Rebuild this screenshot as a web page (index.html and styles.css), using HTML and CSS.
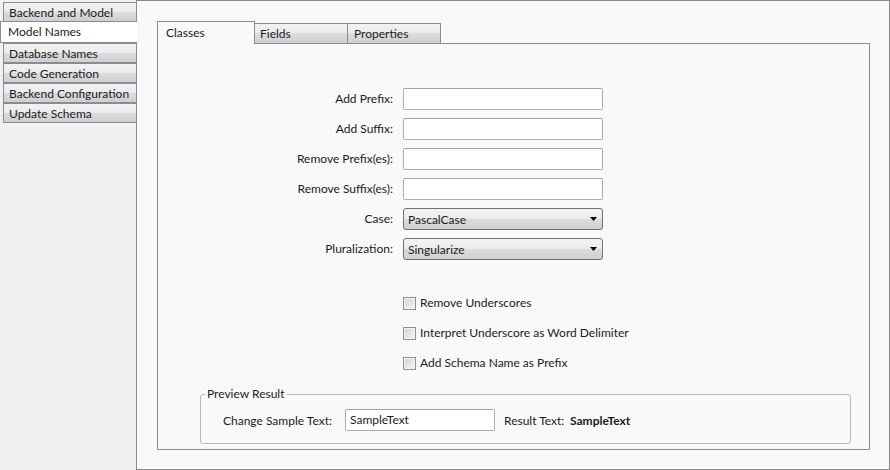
FILE: index.html
```html
<!DOCTYPE html>
<html>
<head>
<meta charset="utf-8">
<link rel="stylesheet" href="styles.css">
</head>
<body>
<div class="window">
  <nav class="side-tabs">
    <div class="vtab">Backend and Model</div>
    <div class="vtab selected">Model Names</div>
    <div class="vtab">Database Names</div>
    <div class="vtab">Code Generation</div>
    <div class="vtab">Backend Configuration</div>
    <div class="vtab">Update Schema</div>
  </nav>
  <main class="panel">
    <div class="htabs">
      <div class="htab selected">Classes</div>
      <div class="htab tab-fields">Fields</div>
      <div class="htab tab-props">Properties</div>
    </div>
    <section class="tab-content">
      <div class="form-grid">
        <label class="lbl">Add Prefix:</label><div class="textbox"></div>
        <label class="lbl">Add Suffix:</label><div class="textbox"></div>
        <label class="lbl">Remove Prefix(es):</label><div class="textbox"></div>
        <label class="lbl">Remove Suffix(es):</label><div class="textbox"></div>
        <label class="lbl">Case:</label>
        <div class="combo"><span>PascalCase</span><svg class="arrow" width="7" height="4" viewBox="0 0 7 4"><polygon points="0,0 7,0 3.5,4" fill="#000"/></svg></div>
        <label class="lbl">Pluralization:</label>
        <div class="combo"><span>Singularize</span><svg class="arrow" width="7" height="4" viewBox="0 0 7 4"><polygon points="0,0 7,0 3.5,4" fill="#000"/></svg></div>
      </div>
      <div class="checks">
        <div class="check"><span class="box"></span><span>Remove Underscores</span></div>
        <div class="check"><span class="box"></span><span>Interpret Underscore as Word Delimiter</span></div>
        <div class="check"><span class="box"></span><span>Add Schema Name as Prefix</span></div>
      </div>
      <fieldset class="preview">
        <legend>Preview Result</legend>
        <div class="preview-row">
          <span class="plabel">Change Sample Text:</span>
          <div class="textbox sample">SampleText</div>
          <span class="rlabel">Result Text:</span>
          <span class="result">SampleText</span>
        </div>
      </fieldset>
    </section>
  </main>
</div>
</body>
</html>
```
FILE: styles.css
```css
html, body {
  margin: 0;
  padding: 0;
}
body {
  background: #f0f0f0;
  font-family: Lato, "Open Sans", sans-serif;
  font-size: 12px;
  color: #1b1b1b;
  width: 890px;
  height: 470px;
  overflow: hidden;
}
.window {
  display: flex;
  height: 470px;
}
.side-tabs {
  width: 136px;
  flex-shrink: 0;
  padding-top: 2px;
  display: flex;
  flex-direction: column;
  box-sizing: border-box;
}
.vtab {
  margin-left: 3px;
  height: 20px;
  box-sizing: border-box;
  border: 1px solid #898c95;
  border-right: none;
  background: linear-gradient(#f2f2f2 0%, #ebebeb 50%, #dddddd 50%, #cfcfcf 100%);
  padding-left: 5px;
  line-height: 19px;
  white-space: nowrap;
}
.vtab.selected {
  margin-left: 0;
  margin-top: -1px;
  height: 22px;
  width: 137px;
  background: #ffffff;
  position: relative;
  z-index: 1;
  padding-left: 7px;
  line-height: 20px;
}
.panel {
  flex: 1;
  box-sizing: border-box;
  height: 470px;
  border: 1px solid #898c95;
  background: #f9f9f9;
  padding: 20px 19px 19px 20px;
  display: flex;
  flex-direction: column;
}
.htabs {
  display: flex;
  align-items: flex-end;
  height: 22px;
  flex-shrink: 0;
}
.htab {
  box-sizing: border-box;
  height: 20px;
  border: 1px solid #898c95;
  border-bottom: none;
  background: linear-gradient(#f2f2f2 0%, #ebebeb 50%, #dddddd 50%, #cfcfcf 100%);
  line-height: 19px;
  white-space: nowrap;
}
.htab.selected {
  width: 98px;
  height: 23px;
  margin-bottom: -1px;
  background: #f9f9f9;
  position: relative;
  z-index: 1;
  padding-left: 8px;
  line-height: 21px;
}
.tab-fields {
  width: 94px;
  margin-left: -1px;
  padding-left: 5px;
}
.tab-props {
  width: 94px;
  margin-left: -1px;
  padding-left: 6px;
}
.tab-content {
  flex: 1;
  border: 1px solid #898c95;
  padding-top: 44px;
  display: flex;
  flex-direction: column;
}
.form-grid {
  display: grid;
  grid-template-columns: 235px 200px;
  grid-auto-rows: 22px;
  column-gap: 10px;
  row-gap: 8px;
}
.lbl {
  text-align: right;
  line-height: 21px;
  white-space: nowrap;
}
.textbox {
  box-sizing: border-box;
  height: 22px;
  background: #ffffff;
  border: 1px solid #abadb3;
  border-top-color: #a3a3a3;
  border-radius: 2px;
  padding-left: 4px;
  line-height: 20px;
}
.combo {
  box-sizing: border-box;
  height: 22px;
  width: 200px;
  border: 1px solid #707070;
  border-radius: 3px;
  background: linear-gradient(#f3f3f3 0%, #ebebeb 50%, #dddddd 50%, #cfcfcf 100%);
  padding: 0 5px 0 4px;
  display: flex;
  align-items: center;
  justify-content: space-between;
}
.arrow {
  display: block;
}
.checks {
  margin: 28px 0 0 245px;
  display: flex;
  flex-direction: column;
}
.check {
  height: 30px;
  display: flex;
  align-items: center;
  gap: 4px;
  white-space: nowrap;
}
.check span:last-child {
  margin-top: -1px;
}
.box {
  width: 13px;
  height: 13px;
  box-sizing: border-box;
  border: 1px solid #8e8f8f;
  background: linear-gradient(135deg, #cfd2d6 0%, #e8e8e8 60%, #f6f6f6 100%);
  box-shadow: inset 0 0 0 1px #f4f4f4;
  flex-shrink: 0;
}
.preview {
  margin: 8px 18px 0 42px;
  padding: 0 0 12px 4px;
  border: 1px solid #b9b9b9;
  border-radius: 3px;
}
.preview legend {
  padding: 0 2px;
  line-height: 16px;
}
.preview-row {
  display: flex;
  align-items: center;
  padding-left: 18px;
  padding-top: 7px;
}
.plabel {
  width: 112px;
  white-space: nowrap;
}
.sample {
  width: 150px;
  margin-left: 10px;
}
.rlabel {
  width: 62px;
  margin-left: 9px;
  white-space: nowrap;
}
.result {
  margin-left: 4px;
  font-weight: bold;
}
```
